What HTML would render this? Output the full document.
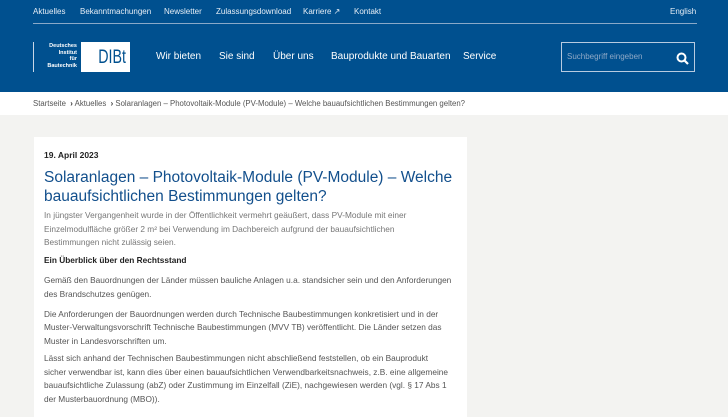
<!DOCTYPE html>
<html><head><meta charset="utf-8"><style>
*{margin:0;padding:0;box-sizing:border-box}
body{width:728px;height:410px;overflow:hidden;background:#f3f3f1;font-family:"Liberation Sans",sans-serif}
.hd{position:absolute;left:0;top:0;width:728px;height:92px;background:#00508f;color:#fff}
.top{position:absolute;top:7px;font-size:8px;color:#e6eef6;white-space:nowrap}
.line{position:absolute;left:33px;top:23px;width:664px;height:1px;background:#8aa9c8}
.nav{position:absolute;top:51px;font-size:10px;white-space:nowrap}
.logo{position:absolute;left:33px;top:42px;width:1px;height:30px;background:#c8d6e6}
.lt{position:absolute;left:38px;top:43px;width:39px;font-size:5.5px;font-weight:bold;text-align:right;line-height:6.5px}
.lb{position:absolute;left:81px;top:42px;width:49px;height:30px;background:#fff}
.lb span{position:absolute;right:4px;top:5px;color:#00508f;font-size:19px;transform:scaleX(0.75);transform-origin:right top}
.search{position:absolute;left:561px;top:42px;width:134px;height:30px;border:1px solid #b8cbe0}
.search span{position:absolute;left:5px;top:9px;font-size:8px;color:#8fa9c6}
.bc{position:absolute;left:0;top:92px;width:728px;height:23px;background:#fff;font-size:7.8px;color:#555;padding:7px 0 0 33px;white-space:nowrap}
.card{position:absolute;left:34px;top:137px;width:433px;height:280px;background:#fff}
.t{position:absolute;left:44px;white-space:nowrap;font-size:8.3px;color:#555}
.b{color:#222;font-weight:bold}
h1{position:absolute;left:44px;top:168px;font-size:15.5px;font-weight:normal;color:#124f8c;line-height:19px;white-space:nowrap}
</style></head><body>
<div class="hd">
<div class="top" style="left:33px">Aktuelles</div>
<div class="top" style="left:80px">Bekanntmachungen</div>
<div class="top" style="left:164px">Newsletter</div>
<div class="top" style="left:216px">Zulassungsdownload</div>
<div class="top" style="left:303px">Karriere ↗</div>
<div class="top" style="left:354px">Kontakt</div>
<div class="top" style="left:670px">English</div>
<div class="line"></div>
<div class="logo"></div>
<div class="lt">Deutsches<br>Institut<br>für<br>Bautechnik</div>
<div class="lb"><span>DIBt</span></div>
<div class="nav" style="left:156px">Wir bieten</div>
<div class="nav" style="left:219px">Sie sind</div>
<div class="nav" style="left:273px">Über uns</div>
<div class="nav" style="left:331px">Bauprodukte und Bauarten</div>
<div class="nav" style="left:463px">Service</div>
<div class="search"><span>Suchbegriff eingeben</span>
<svg style="position:absolute;left:114px;top:9px" width="13" height="13" viewBox="0 0 13 13"><circle cx="5.5" cy="5.5" r="4" fill="none" stroke="#fff" stroke-width="2"/><path d="M8.5 8.5L12 12" stroke="#fff" stroke-width="2.2"/></svg></div>
</div>
<div class="bc">Startseite &nbsp;<b style="color:#333">›</b> Aktuelles &nbsp;<b style="color:#333">›</b> Solaranlagen – Photovoltaik-Module (PV-Module) – Welche bauaufsichtlichen Bestimmungen gelten?</div>
<div class="card"></div>
<div class="t b" style="top:150px;font-size:8.5px">19. April 2023</div>
<h1>Solaranlagen – Photovoltaik-Module (PV-Module) – Welche<br>bauaufsichtlichen Bestimmungen gelten?</h1>
<div class="t" style="top:210px;color:#777">In jüngster Vergangenheit wurde in der Öffentlichkeit vermehrt geäußert, dass PV-Module mit einer</div>
<div class="t" style="top:224px;color:#777">Einzelmodulfläche größer 2 m² bei Verwendung im Dachbereich aufgrund der bauaufsichtlichen</div>
<div class="t" style="top:237px;color:#777">Bestimmungen nicht zulässig seien.</div>
<div class="t b" style="top:255px">Ein Überblick über den Rechtsstand</div>
<div class="t" style="top:275px">Gemäß den Bauordnungen der Länder müssen bauliche Anlagen u.a. standsicher sein und den Anforderungen</div>
<div class="t" style="top:289px">des Brandschutzes genügen.</div>
<div class="t" style="top:309px">Die Anforderungen der Bauordnungen werden durch Technische Baubestimmungen konkretisiert und in der</div>
<div class="t" style="top:322px">Muster-Verwaltungsvorschrift Technische Baubestimmungen (MVV TB) veröffentlicht. Die Länder setzen das</div>
<div class="t" style="top:336px">Muster in Landesvorschriften um.</div>
<div class="t" style="top:353px">Lässt sich anhand der Technischen Baubestimmungen nicht abschließend feststellen, ob ein Bauprodukt</div>
<div class="t" style="top:367px">sicher verwendbar ist, kann dies über einen bauaufsichtlichen Verwendbarkeitsnachweis, z.B. eine allgemeine</div>
<div class="t" style="top:380px">bauaufsichtliche Zulassung (abZ) oder Zustimmung im Einzelfall (ZiE), nachgewiesen werden (vgl. § 17 Abs 1</div>
<div class="t" style="top:394px">der Musterbauordnung (MBO)).</div>
</body></html>
